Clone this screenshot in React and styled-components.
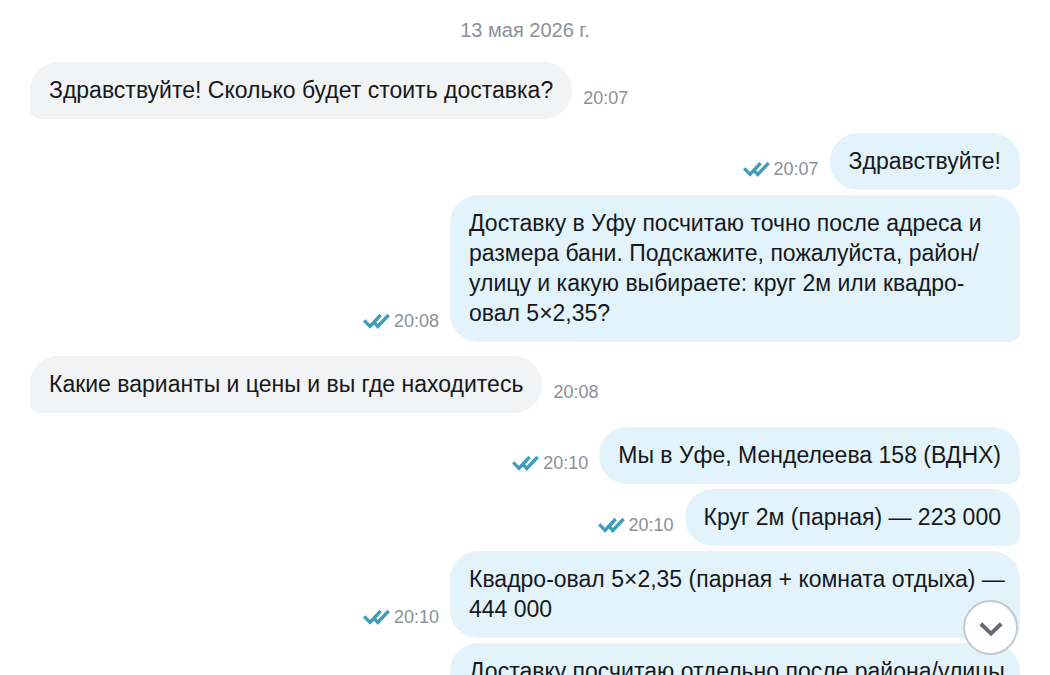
import React from "react";
import styled, { createGlobalStyle } from "styled-components";

const messages = [
  { id: 1, time: "20:07", text: "Здравствуйте! Сколько будет стоить доставка?" },
  { id: 2, own: true, time: "20:07", text: "Здравствуйте!" },
  {
    id: 3,
    own: true,
    wide: true,
    time: "20:08",
    text: "Доставку в Уфу посчитаю точно после адреса и размера бани. Подскажите, пожалуйста, район/улицу и какую выбираете: круг 2м или квадро-овал 5×2,35?",
  },
  { id: 4, time: "20:08", text: "Какие варианты и цены и вы где находитесь" },
  { id: 5, own: true, time: "20:10", text: "Мы в Уфе, Менделеева 158 (ВДНХ)" },
  { id: 6, own: true, time: "20:10", text: "Круг 2м (парная) — 223 000" },
  {
    id: 7,
    own: true,
    wide: true,
    time: "20:10",
    text: "Квадро-овал 5×2,35 (парная + комната отдыха) — 444 000",
  },
  {
    id: 8,
    own: true,
    wide: true,
    text: "Доставку посчитаю отдельно после района/улицы",
  },
];

// consecutive messages of one author go in one group
const groups = messages.reduce((acc, message) => {
  const last = acc[acc.length - 1];
  if (last && Boolean(last[0].own) === Boolean(message.own)) {
    last.push(message);
  } else {
    acc.push([message]);
  }
  return acc;
}, []);

const ReadMark = () => (
  <svg width="27" height="16" viewBox="0 0 27 16" fill="none" aria-hidden="true">
    <g stroke="#3d9dbb" strokeWidth="3.4">
      <path d="M1.2 7.4L7 13.4L17.6 2" />
      <path d="M10.4 8.6L14.8 13.4L25.6 2" />
    </g>
  </svg>
);

const Message = ({ own, wide, time, text }) => (
  <Row $own={own}>
    <Bubble $own={own} $wide={wide}>
      {text}
    </Bubble>
    {time && (
      <Meta>
        {own && <ReadMark />}
        <time>{time}</time>
      </Meta>
    )}
  </Row>
);

const App = () => {
  const scrollDown = () => {
    const list = document.getElementById("messages");
    list.scrollTo({ top: list.scrollHeight, behavior: "smooth" });
  };

  return (
    <>
      <GlobalStyle />
      <Chat id="messages">
        <DateLabel>13 мая 2026 г.</DateLabel>
        {groups.map((group) => (
          <Group key={group[0].id}>
            {group.map((message) => (
              <Message key={message.id} {...message} />
            ))}
          </Group>
        ))}
      </Chat>
      <ScrollButton type="button" aria-label="Вниз" onClick={scrollDown}>
        <svg width="24" height="15" viewBox="0 0 24 15" fill="none" aria-hidden="true">
          <path d="M1.8 1.8L12 11.6L22.2 1.8" stroke="#666a75" strokeWidth="4" />
        </svg>
      </ScrollButton>
    </>
  );
};

export default App;

const GlobalStyle = createGlobalStyle`
  * {
    box-sizing: border-box;
  }
  body {
    margin: 0;
    background: #fff;
    color: #16181b;
    font-family: "Liberation Sans", Arial, sans-serif;
  }
`;

const Chat = styled.main`
  display: flex;
  flex-direction: column;
  gap: 14px;
  height: 100vh;
  padding: 18px 30px 0;
  overflow-y: auto;
  scrollbar-width: none;
`;

const DateLabel = styled.div`
  flex-shrink: 0;
  margin-bottom: 6px;
  color: #8b9099;
  font-size: 20px;
  line-height: 24px;
  text-align: center;
`;

const Group = styled.section`
  display: flex;
  flex-direction: column;
  flex-shrink: 0;
  gap: 5px;
`;

const Row = styled.div`
  display: flex;
  flex-direction: ${({ $own }) => ($own ? "row-reverse" : "row")};
  align-items: flex-end;
  gap: 11px;
`;

const Bubble = styled.div`
  width: ${({ $wide }) => ($wide ? "570px" : "auto")};
  max-width: 570px;
  padding: 13px ${({ $wide }) => ($wide ? "10px" : "19px")} 14px 19px;
  border-radius: ${({ $own }) => ($own ? "28px 28px 10px 28px" : "28px 28px 28px 10px")};
  background: ${({ $own }) => ($own ? "#e2f3fc" : "#f1f3f5")};
  font-size: 23px;
  line-height: 30px;
`;

const Meta = styled.div`
  display: flex;
  align-items: center;
  gap: 4px;
  padding-bottom: 10px;
  color: #8b9099;
  font-size: 18px;
  line-height: 22px;
`;

const ScrollButton = styled.button`
  position: fixed;
  right: 32px;
  bottom: 20px;
  display: flex;
  justify-content: center;
  align-items: center;
  width: 55px;
  height: 55px;
  padding: 4px 0 0;
  border: 2px solid #c5c8cf;
  border-radius: 50%;
  background: #fff;
  cursor: pointer;
`;
